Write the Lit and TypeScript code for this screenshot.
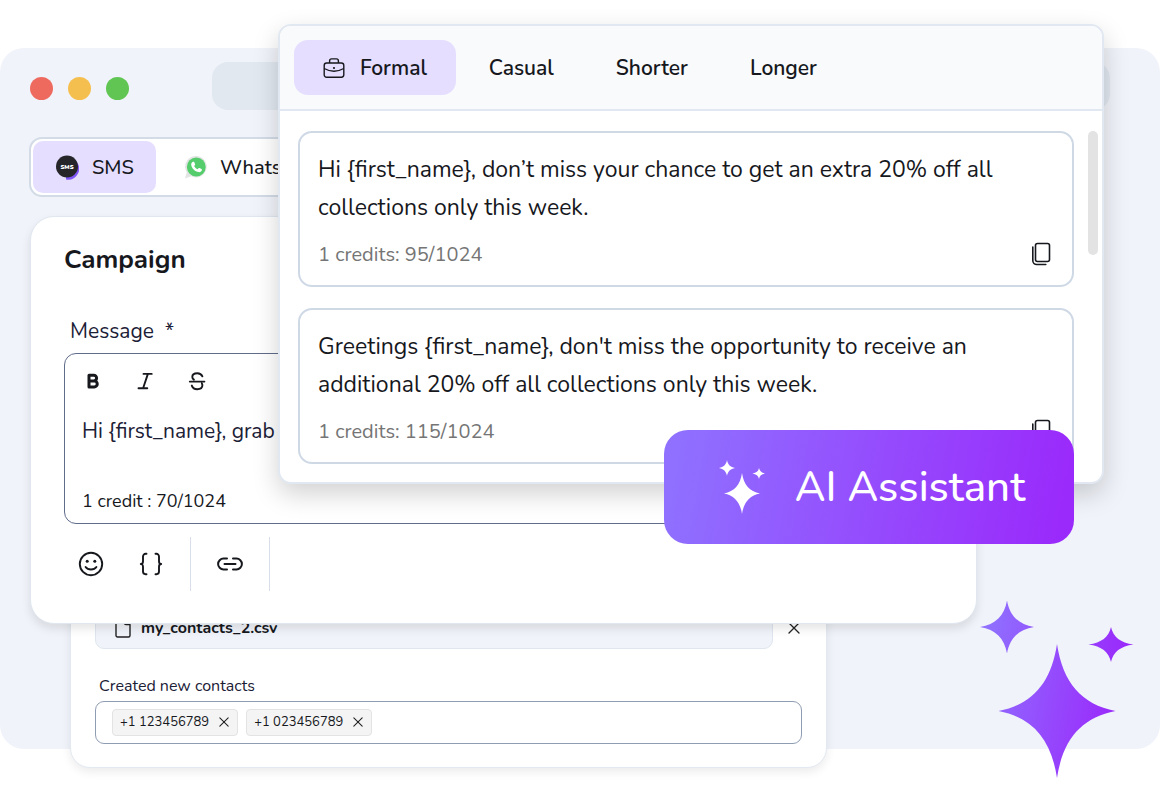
import { LitElement, html, css, svg } from "lit";
import { customElement, property, state } from "lit/decorators.js";
import { classMap } from "lit/directives/class-map.js";

const sharedStyles = css`
  :host {
    font-family: Nunito, Lato, "Noto Sans", sans-serif;
    color: #16181d;
  }
  * {
    box-sizing: border-box;
  }
  button {
    display: flex;
    align-items: center;
    justify-content: center;
    margin: 0;
    padding: 0;
    border: 0;
    background: none;
    color: inherit;
    font: inherit;
    cursor: pointer;
  }
  svg {
    display: block;
    flex: none;
  }
`;

const star = (cx: number, cy: number, rx: number, ry: number) => {
  const p = (x: number, y: number) => `${cx + x * rx} ${cy + y * ry}`;
  return svg`<path d="M${p(0, -1)}C${p(0.1, -0.42)} ${p(0.42, -0.1)} ${p(1, 0)}C${p(0.42, 0.1)} ${p(0.1, 0.42)} ${p(0, 1)}C${p(-0.1, 0.42)} ${p(-0.42, 0.1)} ${p(-1, 0)}C${p(-0.42, -0.1)} ${p(-0.1, -0.42)} ${p(0, -1)}Z"/>`;
};

const closeIcon = (size: number) => html`
  <svg width=${size} height=${size} viewBox="0 0 12 12" fill="none" stroke="#222" stroke-width="1.3" stroke-linecap="round">
    <path d="M1 1l10 10M11 1L1 11" />
  </svg>`;

const copyIcon = html`
  <svg width="20" height="24" viewBox="0 0 20 24" fill="none" stroke="#16181d" stroke-width="1.6" stroke-linejoin="round">
    <rect x="4.5" y="1.5" width="14" height="18" rx="2" />
    <path d="M1.8 5v13.5a4 4 0 0 0 4 4h9" stroke-linecap="round" />
  </svg>`;

@customElement("suggestion-card")
class SuggestionCard extends LitElement {
  @property() text = "";
  @property() credits = "";

  static styles = [
    sharedStyles,
    css`
      :host {
        display: block;
        padding: 18px 18px 19px;
        border: 2px solid #cfd9e6;
        border-radius: 14px;
        background: #fff;
      }
      .text {
        margin: 0;
        font-size: 23px;
        line-height: 38px;
      }
      .foot {
        display: flex;
        align-items: center;
        justify-content: space-between;
        height: 24px;
        margin: 15px 3px 0 0;
        color: #757575;
        font-size: 20px;
      }
    `,
  ];

  render() {
    return html`
      <p class="text">${this.text}</p>
      <div class="foot">
        <span>${this.credits}</span>
        <button aria-label="Copy message">${copyIcon}</button>
      </div>
    `;
  }
}

@customElement("suggestion-panel")
class SuggestionPanel extends LitElement {
  @state() tone = "Formal";

  static styles = [
    sharedStyles,
    css`
      :host {
        display: block;
        border: 2px solid #e1e8f1;
        border-radius: 13px;
        background: #fff;
        box-shadow: 0 10px 26px rgba(0, 0, 0, 0.18);
      }
      .tones {
        display: flex;
        gap: 4px;
        padding: 14px;
        border-bottom: 2px solid #e1e8f1;
        border-radius: 11px 11px 0 0;
        background: #f9fafc;
      }
      .tone {
        gap: 15px;
        height: 55px;
        padding: 0 29px;
        border-radius: 14px;
        font-size: 21px;
        font-weight: 600;
      }
      .tone.active {
        background: #e5deff;
      }
      .body {
        display: flex;
        gap: 14px;
        padding: 20px 4px 18px 18px;
      }
      .list {
        flex: 1;
        display: grid;
        gap: 21px;
      }
      .thumb {
        width: 10px;
        height: 124px;
        border-radius: 5px;
        background: #e3e3e3;
      }
      .assistant {
        position: absolute;
        right: 28px;
        bottom: -62px;
        gap: 30px;
        width: 410px;
        height: 114px;
        padding-left: 6px;
        border-radius: 24px;
        background: linear-gradient(100deg, #8f70ff 4%, #9a2afb 96%);
        color: #fff;
        font-size: 42px;
        font-weight: 500;
      }
    `,
  ];

  render() {
    const briefcase = html`
      <svg width="22" height="20" viewBox="0 0 22 20" fill="none" stroke="#16181d" stroke-width="1.4" stroke-linejoin="round">
        <rect x="1.2" y="5" width="19.600" height="14.2" rx="2.4" />
        <path d="M6.600 5V2.900a2 2 0 0 1 2-2h4.800a2 2 0 0 1 2 2V5M1.200 10.500c6.500 3.600 13.100 3.600 19.600 0" />
        <circle cx="11" cy="10" r="1.1" fill="#16181d" stroke="none" />
      </svg>`;
    return html`
      <div class="tones">
        ${["Formal", "Casual", "Shorter", "Longer"].map(
          (t) => html`
            <button class=${classMap({ tone: true, active: t === this.tone })} @click=${() => (this.tone = t)}>
              ${t === "Formal" ? briefcase : ""}${t}
            </button>`
        )}
      </div>
      <div class="body">
        <div class="list">
          <suggestion-card
            text="Hi {first_name}, don’t miss your chance to get an extra 20% off all collections only this week."
            credits="1 credits: 95/1024"
          ></suggestion-card>
          <suggestion-card
            text="Greetings {first_name}, don't miss the opportunity to receive an additional 20% off all collections only this week."
            credits="1 credits: 115/1024"
          ></suggestion-card>
        </div>
        <div class="thumb"></div>
      </div>
      <button class="assistant">
        <svg width="46" height="54" viewBox="0 0 46 54" fill="#fff">
          ${star(8, 8, 8, 8)}${star(40, 13.500, 6.500, 5.500)}${star(23, 33.500, 18, 20.500)}
        </svg>
        AI Assistant
      </button>
    `;
  }
}

@customElement("campaign-card")
class CampaignCard extends LitElement {
  static styles = [
    sharedStyles,
    css`
      :host {
        display: block;
        padding: 24px 33px 32px;
        border: 1px solid #e0e7f0;
        border-radius: 24px;
        background: #fff;
        box-shadow: 0 5px 10px rgba(0, 0, 0, 0.1);
      }
      .title {
        margin: 0;
        font-size: 26px;
        line-height: 38px;
        font-weight: 700;
      }
      .label {
        display: block;
        margin: 40px 6px 10px;
        color: #1b2036;
        font-size: 21px;
        line-height: 24px;
      }
      .editor {
        display: flex;
        flex-direction: column;
        padding: 15px 17px 7px;
        border: 1px solid #5f6c8a;
        border-radius: 12px;
      }
      .format {
        display: flex;
        gap: 28px;
      }
      .format button {
        width: 24px;
        height: 24px;
      }
      .message {
        height: 70px;
        margin-top: 22px;
        padding: 0;
        border: 0;
        outline: 0;
        resize: none;
        background: none;
        color: #1b2036;
        font: inherit;
        font-size: 21px;
        line-height: 32px;
      }
      .count {
        padding-top: 1px;
        font-size: 18px;
        line-height: 30px;
      }
      .tools {
        display: flex;
        margin-top: 13px;
      }
      .group {
        display: flex;
        gap: 32px;
        padding: 12px 25px;
        border-right: 1px solid #d9dfe8;
      }
      .group:first-child {
        padding-left: 13px;
      }
      .group button {
        width: 28px;
        height: 30px;
      }
    `,
  ];

  render() {
    return html`
      <h2 class="title">Campaign</h2>
      <label class="label" for="message">Message &nbsp;*</label>
      <div class="editor">
        <div class="format">
          <button aria-label="Bold">
            <svg width="24" height="24" viewBox="0 0 24 24" fill="none" stroke="#16181d" stroke-width="3" stroke-linejoin="round">
              <path d="M7 6.200h4.700a2.900 2.900 0 0 1 0 5.800H7zM7 12h5.300a2.950 2.950 0 0 1 0 5.900H7z" />
            </svg>
          </button>
          <button aria-label="Italic">
            <svg width="24" height="24" viewBox="0 0 24 24" fill="none" stroke="#16181d" stroke-width="1.900" stroke-linecap="round">
              <path d="M9.500 4.900h8.200M4.500 19.200h8.800M13.900 4.900L9.100 19.200" />
            </svg>
          </button>
          <button aria-label="Strikethrough">
            <svg width="24" height="24" viewBox="0 0 24 24" fill="none" stroke="#16181d" stroke-width="1.900" stroke-linecap="round">
              <path d="M3.800 12.600h14.600M16.400 7.300c-.9-2-2.600-3.100-5.100-3.100-3 0-5 1.500-5 3.700 0 1.300.6 2.100 1.600 2.700M5.800 16.600c.8 2.300 2.700 3.600 5.400 3.600 3.100 0 5.200-1.500 5.200-3.900 0-.8-.2-1.400-.5-1.900" />
            </svg>
          </button>
        </div>
        <textarea class="message" id="message" .value=${"Hi {first_name}, grab"}></textarea>
        <div class="count">1 credit : 70/1024</div>
      </div>
      <div class="tools">
        <div class="group">
          <button aria-label="Insert emoji">
            <svg width="26" height="26" viewBox="0 0 26 26" fill="none" stroke="#16181d" stroke-width="1.900" stroke-linecap="round">
              <circle cx="13" cy="13" r="11.200" />
              <path d="M7.600 16c2.300 3.400 8.500 3.400 10.800 0" />
              <circle cx="9.200" cy="10.200" r="1.500" fill="#16181d" stroke="none" />
              <circle cx="16.800" cy="10.200" r="1.500" fill="#16181d" stroke="none" />
            </svg>
          </button>
          <button aria-label="Insert variable">
            <svg width="26" height="24" viewBox="0 0 26 24" fill="none" stroke="#16181d" stroke-width="1.900" stroke-linecap="round" stroke-linejoin="round">
              <path d="M8.500 1.800H7.600A2.600 2.600 0 0 0 5 4.400v4.800c0 1.700-.8 2.800-2.200 2.800C4.200 12 5 13.100 5 14.800v4.800a2.600 2.600 0 0 0 2.600 2.600h.9M17.500 1.800h.9A2.600 2.600 0 0 1 21 4.400v4.800c0 1.700.8 2.800 2.200 2.800-1.400 0-2.200 1.100-2.200 2.800v4.800a2.600 2.600 0 0 1-2.600 2.600h-.9" />
            </svg>
          </button>
        </div>
        <div class="group">
          <button aria-label="Insert link">
            <svg width="26" height="14" viewBox="0 0 26 14" fill="none" stroke="#16181d" stroke-width="2" stroke-linecap="round">
              <path d="M10 1.600H6.500a5.400 5.400 0 0 0 0 10.800H10M16 1.600h3.500a5.400 5.400 0 0 1 0 10.800H16M7.500 7h11" />
            </svg>
          </button>
        </div>
      </div>
    `;
  }
}

@customElement("contacts-card")
class ContactsCard extends LitElement {
  static styles = [
    sharedStyles,
    css`
      :host {
        display: block;
        padding: 24px 24px 23px;
        border: 1px solid #e3e9f1;
        border-radius: 20px;
        background: #fff;
        box-shadow: 0 4px 10px rgba(0, 0, 0, 0.08);
      }
      .row {
        display: flex;
        align-items: center;
        gap: 13px;
      }
      .file {
        flex: 1;
        display: flex;
        align-items: center;
        gap: 10px;
        height: 42px;
        margin: 0;
        padding: 0 19px;
        border: 1px solid #dfe6f0;
        border-radius: 9px;
        background: #f0f3f9;
        font-size: 16px;
        font-weight: 700;
      }
      .label {
        display: block;
        margin: 27px 4px 5px;
        color: #1b2036;
        font-size: 16px;
        line-height: 20px;
      }
      .field {
        display: flex;
        align-items: center;
        gap: 8px;
        height: 43px;
        padding: 0 16px;
        border: 1px solid #8f9db3;
        border-radius: 9px;
      }
      .chip {
        display: flex;
        align-items: center;
        gap: 10px;
        height: 27px;
        padding: 0 8px 2px 7px;
        border: 1px solid #e3e3e3;
        border-radius: 4px;
        background: #f4f4f4;
        font-size: 13px;
      }
      .entry {
        flex: 1;
        min-width: 0;
        border: 0;
        outline: 0;
        background: none;
        font: inherit;
      }
      .remove {
        width: 16px;
        height: 26px;
      }
    `,
  ];

  render() {
    return html`
      <div class="row">
        <div class="file">
          <svg width="16" height="20" viewBox="0 0 16 20" fill="none" stroke="#222" stroke-width="1.400" stroke-linejoin="round">
            <path d="M1 2.500A1.500 1.500 0 0 1 2.500 1H9.500L15 6.500v11a1.500 1.500 0 0 1-1.500 1.500h-11A1.500 1.500 0 0 1 1 17.500zM9.500 1v4a1.500 1.500 0 0 0 1.500 1.500h4" />
          </svg>
          my_contacts_2.csv
        </div>
        <button class="remove" aria-label="Remove file">${closeIcon(12)}</button>
      </div>
      <label class="label" for="contacts">Created new contacts</label>
      <div class="field">
        ${["+1 123456789", "+1 023456789"].map(
          (n) => html`<span class="chip">${n}<button aria-label="Remove ${n}">${closeIcon(10)}</button></span>`
        )}
        <input class="entry" id="contacts" />
      </div>
    `;
  }
}

@customElement("app-root")
class AppRoot extends LitElement {
  static styles = [
    sharedStyles,
    css`
      :host {
        display: block;
        box-sizing: border-box;
        position: relative;
        min-height: 100vh;
        padding: 48px 0;
        overflow: hidden;
        background: #fff;
      }
      .window {
        display: flow-root;
        padding-top: 14px;
        border-radius: 24px;
        background: #f0f3f9;
      }
      .titlebar {
        display: flex;
        align-items: center;
        gap: 15px;
        padding: 0 50px 0 30px;
      }
      .dot {
        width: 23px;
        height: 23px;
        margin-top: 4px;
        border-radius: 50%;
      }
      .red {
        background: #ee6a5f;
      }
      .amber {
        background: #f5bf4f;
      }
      .green {
        background: #61c554;
      }
      .address {
        flex: 1;
        height: 48px;
        margin-left: 68px;
        border-radius: 16px;
        background: #e1e8f0;
      }
      .channels {
        display: flex;
        width: max-content;
        margin: 27px 0 19px 29px;
        padding: 2px;
        border: 2px solid #d2dbe6;
        border-radius: 13px;
        background: #fff;
      }
      .channel {
        gap: 13px;
        height: 52px;
        padding: 0 22px 0 23px;
        border-radius: 10px;
        font-size: 20px;
        font-weight: 500;
      }
      .channel.active {
        background: #e5deff;
      }
      .channel + .channel {
        margin-left: 6px;
      }
      .campaign {
        position: relative;
        z-index: 1;
        margin: 0 183px 0 30px;
      }
      .contacts {
        margin: -42px 333px -19px 70px;
      }
      .suggestions {
        position: absolute;
        z-index: 2;
        top: 24px;
        left: 278px;
        right: 56px;
      }
      .sparkles {
        position: absolute;
        z-index: 1;
        top: 600px;
        right: 26px;
      }
    `,
  ];

  @state() channel = "SMS";

  render() {
    const sms = html`
      <svg width="23" height="25" viewBox="0 0 23 25">
        <path d="M21.500 8a11 11 0 0 1-11.500 16.500v-5z" fill="#7f56f5" />
        <circle cx="11" cy="11.500" r="11" fill="#26262a" />
        <text x="11" y="13.700" text-anchor="middle" font-size="6" font-weight="900" fill="#fff">SMS</text>
      </svg>`;
    const whatsapp = html`
      <svg width="22" height="23" viewBox="0 0 22 23">
        <path d="M11.300 0a10.700 10.700 0 1 1-5.200 20.200L0 22.500l1.800-6.300A10.700 10.700 0 0 1 11.300 0z" fill="#e2e4e4" />
        <circle cx="11.300" cy="11" r="9.400" fill="#55cd6c" />
        <path d="M8 5.800c.5-.3 1-.2 1.200.3l.9 2.100c.1.400 0 .7-.3 1l-.7.800c.8 1.500 2 2.600 3.500 3.300l.9-1.100c.3-.3.600-.4 1-.2l2 1c.5.2.5.6.4 1.100-.4 1.500-1.700 2.200-3.100 2-4-.600-7.200-3.700-7.600-7.300-.1-1.300.600-2.400 1.800-3z" fill="#fff" />
      </svg>`;
    return html`
      <div class="window">
        <div class="titlebar">
          <span class="dot red"></span>
          <span class="dot amber"></span>
          <span class="dot green"></span>
          <span class="address"></span>
        </div>
        <div class="channels">
          ${[
            { name: "SMS", icon: sms },
            { name: "WhatsApp", icon: whatsapp },
          ].map(
            (c) => html`
              <button
                class=${classMap({ channel: true, active: c.name === this.channel })}
                @click=${() => (this.channel = c.name)}
              >
                ${c.icon}${c.name}
              </button>`
          )}
        </div>
        <campaign-card class="campaign"></campaign-card>
        <contacts-card class="contacts"></contacts-card>
      </div>
      <suggestion-panel class="suggestions"></suggestion-panel>
      <svg class="sparkles" width="154" height="178" viewBox="0 0 154 178" fill="url(#violet)">
        <defs>
          <linearGradient id="violet" gradientUnits="userSpaceOnUse" x1="0" y1="60" x2="140" y2="86">
            <stop offset="0" stop-color="#8f70ff" />
            <stop offset="1" stop-color="#9a2afb" />
          </linearGradient>
        </defs>
        ${star(27, 27, 27, 26.500)}${star(131, 44.500, 22.500, 17.500)}${star(77, 111, 58.500, 67)}
      </svg>
    `;
  }
}
